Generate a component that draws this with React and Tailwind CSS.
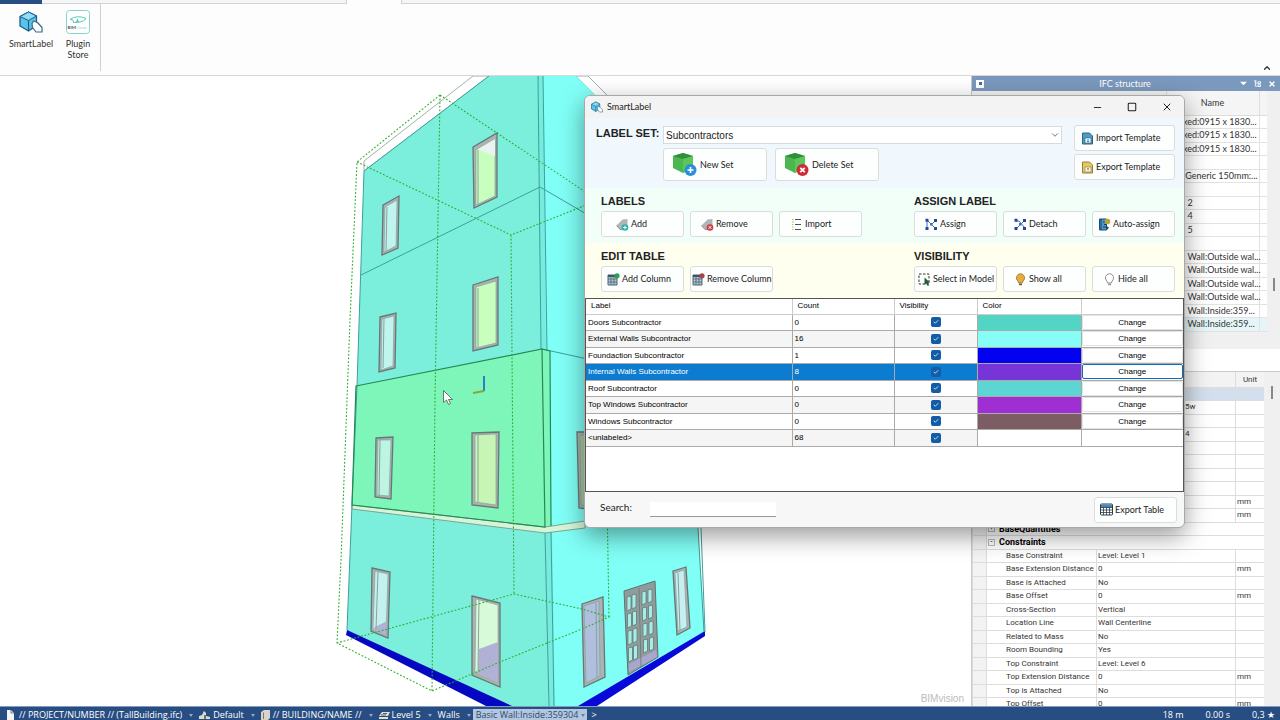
import { Check, ChevronDown, ChevronUp, Minus, Square, X } from 'lucide-react'

const compact = "font-['Lato','Roboto',sans-serif]"
const ui = "font-['Open_Sans','Noto_Sans',sans-serif]"

const labelRows = [
  { label: 'Doors Subcontractor', count: 0, color: '#53d5c5' },
  { label: 'External Walls Subcontractor', count: 16, color: '#86fdf6' },
  { label: 'Foundaction Subcontractor', count: 1, color: '#0202f0' },
  { label: 'Internal Walls Subcontractor', count: 8, color: '#7735d8', selected: true },
  { label: 'Roof Subcontractor', count: 0, color: '#5cd5d3' },
  { label: 'Top Windows Subcontractor', count: 0, color: '#a02fd3' },
  { label: 'Windows Subcontractor', count: 0, color: '#7b5d63' },
  { label: '<unlabeled>', count: 68 },
]

const treeRows = [
  'xed:0915 x 1830...', 'xed:0915 x 1830...', 'xed:0915 x 1830...', '',
  ':Generic 150mm:...', '', 'l 2', 'l 4', 'l 5', '',
  ': Wall:Outside wal...', ': Wall:Outside wal...', ': Wall:Outside wal...', ': Wall:Outside wal...',
  ': Wall:Inside:359...', ': Wall:Inside:359...',
]

const propertyRows = [
  { selected: true },
  { tail: '5w' },
  {},
  { tail: '4' },
  {},
  {},
  {},
  {},
  { unit: 'mm' },
  { unit: 'mm' },
  { group: 'BaseQuantities', sign: '+' },
  { group: 'Constraints', sign: '-' },
  { name: 'Base Constraint', value: 'Level: Level 1' },
  { name: 'Base Extension Distance', value: '0', unit: 'mm' },
  { name: 'Base is Attached', value: 'No' },
  { name: 'Base Offset', value: '0', unit: 'mm' },
  { name: 'Cross-Section', value: 'Vertical' },
  { name: 'Location Line', value: 'Wall Centerline' },
  { name: 'Related to Mass', value: 'No' },
  { name: 'Room Bounding', value: 'Yes' },
  { name: 'Top Constraint', value: 'Level: Level 6' },
  { name: 'Top Extension Distance', value: '0', unit: 'mm' },
  { name: 'Top is Attached', value: 'No' },
  { name: 'Top Offset', value: '0', unit: 'mm' },
]

/* ---------- icons ---------- */

const CubeIcon = ({ className }) => (
  <svg viewBox="0 0 24 22" className={className}>
    <path d="M1 5.5 9.5 1l8 4v9.5l-8 5.5L1 15z" fill="#5cc3e8" stroke="#1d5f86" strokeWidth="1.3" strokeLinejoin="round" />
    <path d="M1 5.5 9.5 9.5l8-4.5L9.5 1z" fill="#8edcf5" stroke="#1d5f86" strokeWidth="1" strokeLinejoin="round" />
    <path d="M9.5 9.5V20" stroke="#1d5f86" strokeWidth="1.2" />
    <path d="M13 12.500 14.500 10l4 1.500 4.500 5v4.500h-6l-3.500-4.500z" fill="#fff" stroke="#2f6d92" strokeWidth="1.200" strokeLinejoin="round" />
  </svg>
)

const StoreIcon = () => (
  <svg viewBox="0 0 24 24" className="size-6">
    <rect x=".5" y=".5" width="23" height="23" rx="3" fill="#fff" stroke="#86d3cd" />
    <path d="M4 9.500Q11 4.500 20 8.500 16 13.500 7 12.200 9 10 4 9.500Z" fill="none" stroke="#55c9b4" />
    <path d="M11.500 8.200 13 12h-3z" fill="#55c9b4" />
    <text x="1.500" y="18.500" fontSize="4.500" fontWeight="700" fill="#555">BIM</text>
    <text x="10.500" y="18.500" fontSize="4" fill="#8fd6cf">vision</text>
  </svg>
)

const BoxIcon = ({ remove }) => (
  <svg viewBox="0 0 25 25" className="size-[25px] shrink-0">
    <path d="M1 4 11 1l10 3v12l-10 5L1 16z" fill="#4cb750" />
    <path d="M1 4 11 1l10 3-10 3z" fill="#2f8f3a" />
    <path d="M11 7 21 4v12l-10 5z" fill="#5cc65c" />
    <circle cx="18.500" cy="18" r="6" fill={remove ? '#cf2c36' : '#2a8fd6'} />
    {remove
      ? <path d="m16.300 15.800 4.400 4.400m0-4.400-4.400 4.400" stroke="#fff" strokeWidth="1.800" />
      : <path d="M18.500 15v6m-3-3h6" stroke="#fff" strokeWidth="1.600" />}
  </svg>
)

const TagIcon = ({ remove }) => (
  <svg viewBox="0 0 13 13" className="size-[13px] shrink-0">
    <path d="M.5 7.500 6.500 1.500 11.500 1v7L7 11.500H4z" fill="#b1b5b7" />
    <path d="M.5 7.500 4 11.500 7 11.500" stroke="#8b8f92" fill="none" />
    <circle cx="9" cy="9.500" r="3.300" fill={remove ? '#cf3b45' : '#27b3b0'} />
    {remove
      ? <path d="m7.700 8.200 2.600 2.600m0-2.600-2.600 2.600" stroke="#fff" />
      : <path d="M9 7.700v3.600M7.200 9.500h3.600" stroke="#fff" />}
  </svg>
)

const ListIcon = () => (
  <svg viewBox="0 0 13 13" className="size-[13px] shrink-0">
    <path d="M5 1.500h6M5 6.500h6M5 11.500h6" stroke="#4a5068" strokeWidth="1.200" />
    <path d="M2 1.500h1.500M2 4h1.500M2 6.500h1.500M2 9h1.500M2 11.500h1.500" stroke="#d6b84d" />
  </svg>
)

const NodesIcon = ({ detach }) => (
  <svg viewBox="0 0 13 13" className="size-[13px] shrink-0">
    <path d={detach ? 'M2 3h3l6 7M2 11 11 2' : 'M2 2v9M2 2l9 9M6.500 6.500 11 2'} stroke="#3d6fc0" fill="none" />
    <path d="M.5.800h3v3h-3zM.5 9h3v3h-3zM9 1h3v3H9zM9 9h3v3H9z" fill="#24479a" />
    <path d="M5 5h2.500v2.500H5z" fill="#3d6fc0" />
  </svg>
)

const BookIcon = () => (
  <svg viewBox="0 0 13 13" className="size-[13px] shrink-0">
    <path d="M1.500 1h7v11h-7z" fill="#4d97c9" stroke="#1d4d78" />
    <path d="M3 1v11M5 4h3M5 9h4M6 6.500h3" stroke="#153e63" />
    <circle cx="9.500" cy="3.500" r="2.800" fill="#b9a437" />
    <path d="M8.500 8 11 9.500 9 12z" fill="#1d4d78" />
  </svg>
)

const ColumnIcon = ({ remove }) => (
  <svg viewBox="0 0 13 13" className="size-[13px] shrink-0">
    <path d="M1 2h9v10H1z" fill="#b4c6d3" stroke="#4d6475" />
    <path d="M1 3h9" stroke="#3a5262" strokeWidth="2" />
    <path d="M4 3v9M7 3v9M1 6h9M1 9h9" stroke="#4d6475" strokeWidth=".8" />
    <circle cx="10" cy="2.800" r="2.600" fill={remove ? '#a9404c' : '#2f9e52'} />
  </svg>
)

const SelectIcon = () => (
  <svg viewBox="0 0 13 13" className="size-[13px] shrink-0">
    <path d="M1 1h10v10H1z" fill="none" stroke="#333" strokeDasharray="2.500 1.500" />
    <path d="M6.500 4.500 12 9.500l-2 .3 1 2.500-1.300.7-1.200-2.500-2 1.200z" fill="#225c35" />
  </svg>
)

const BulbIcon = ({ on }) => (
  <svg viewBox="0 0 13 13" className="size-[13px] shrink-0">
    <path d="M6.500.7a4.200 4.200 0 0 1 2.600 7.400L8.400 10H4.600L3.900 8.100A4.200 4.200 0 0 1 6.500.700z" fill={on ? '#e3ae3a' : '#fff'} stroke={on ? '#9a7430' : '#777'} strokeWidth=".8" />
    <path d="M5 10.500h3v1.700H5z" fill={on ? '#6d5c3a' : '#999'} />
  </svg>
)

const TemplateIcon = ({ out }) => (
  <svg viewBox="0 0 13 13" className="size-[13px] shrink-0">
    <path d="M1.500 1h7l3 3v8h-10z" fill={out ? '#e6c95c' : '#4c9cc4'} stroke={out ? '#96803a' : '#2b6585'} />
    <path d="M4 6h6v5H4z" fill="#fff" stroke={out ? '#96803a' : '#2b6585'} strokeWidth=".7" />
    <path d={out ? 'M7 10V7M5.800 8.200 7 7l1.200 1.200' : 'M7 7v3M5.800 8.800 7 10l1.200-1.200'} stroke={out ? '#96803a' : '#2b6585'} strokeWidth=".8" fill="none" />
  </svg>
)

const GridIcon = () => (
  <svg viewBox="0 0 13 13" className="size-[13px] shrink-0">
    <rect x=".5" y="1" width="12" height="11" rx="1" fill="#fff" stroke="#2b3c4b" />
    <path d="M1 1.500h11v3H1z" fill="#3f87b5" />
    <path d="M.5 4.500h12M.5 7h12M.5 9.500h12M3.500 4v8M6.500 4v8M9.500 4v8" stroke="#2b3c4b" strokeWidth=".8" />
  </svg>
)

/* ---------- 3D view ---------- */

const windowPanes = [
  { frame: '473,147 497,133 497,197 474,208', glass: '476,150 495,139 495,196 476,205', fill: '#c9ffbe' },
  { frame: '383,205 399,196 398,248 382,255', glass: '385,207 397,200 396,246 384,252', fill: '#c0f4ee' },
  { frame: '473,285 498,277 498,345 473,351', glass: '476,287 496,281 496,343 476,348', fill: '#c9ffbe' },
  { frame: '380,317 396,313 395,368 379,372', glass: '382,319 394,316 393,366 381,370', fill: '#c0f4ee' },
  { frame: '376,438 393,437 391,499 375,497', glass: '378,440 391,440 389,496 377,495', fill: '#bdf4e2' },
  { frame: '472,433 499,432 498,508 472,505', glass: '475,435 496,434 496,505 475,502', fill: '#c7f5b6' },
  { frame: '577,432 587,432 587,509 579,508', glass: '580,435 587,435 587,506 581,505', fill: '#a9c99e' },
  { frame: '372,568 390,572 388,638 371,631', glass: '375,571 388,574 386,635 373,629', fill: '#c3f1f0', floor: '375,627 387,621 386,635 374,629' },
  { frame: '472,596 500,603 500,687 472,675', glass: '476,599 498,605 498,683 475,672', fill: '#d7fbd9', floor: '479,649 498,642 498,683 478,673' },
  { frame: '582,604 603,597 605,677 584,687', glass: '584,606 599,601 600,676 586,683', fill: '#b0bfdd' },
  { frame: '673,571 686,567 690,628 677,635', glass: '675,573 684,570 687,627 678,631', fill: '#c5eff0' },
]

const ModelView = () => (
  <svg viewBox="0 76 971 630" preserveAspectRatio="xMinYMin slice" className="h-full w-full" role="img" aria-label="TallBuilding">
    <g stroke="#8a9a9a" strokeWidth=".8" fill="#fff">
      <path d="M473 76 364 161v10L489 76z" />
      <path d="M576 76 640 140V128L588 76z" />
    </g>
    <path d="M489 76h50l2 274 4 177 4 185h-42L347 632l5-127 5-119 7-215z" fill="#7befdc" />
    <path d="M539 76h37l122 120v332l7 104-130 80h-26l-4-185-4-177z" fill="#80fff6" />
    <path d="M538 76h5l3 274 6 180 3 180h-6l-4-183-4-177z" fill="#76ecdf" />
    <path d="m356 386 186-37 8 1 1 176-6 1-193-22z" fill="#7ef6ba" />
    <path d="m352 505 193 22 40-6v7l-40 5-193-24z" fill="#d5f5d8" stroke="#7aa494" />
    <path d="M347 630 512 706l8 6h-22l-12-6-140-71z" fill="#0508c0" />
    <path d="m705 631-127 75-6 6h16l9-6 108-70z" fill="#0808d8" />
    <g fill="none" stroke="#3f9f9b" strokeWidth="1">
      <path d="m364 171-7 215-5 119-5 125M364 171 489 76" />
      <path d="m361 275 179-88 60 35M538 76l3 274M543 76l4 274M542 349l50 11" />
      <path d="m545 533 4 173M551 532l3 174M698 528l6 104M701 528l4 104" />
    </g>
    <path d="m356 386 186-37 3 178-193-22zM542 349l8 2 1 175" fill="none" stroke="#248a55" strokeWidth="1.2" />
    {windowPanes.map((pane) => (
      <g key={pane.frame}>
        <polygon points={pane.frame} fill="#a9b3b0" stroke="#667776" strokeWidth="1.300" />
        <polygon points={pane.glass} fill={pane.fill} stroke="#7f9a98" strokeWidth=".6" />
        {pane.floor && <polygon points={pane.floor} fill="#b1b1d6" />}
      </g>
    ))}
    <path d="M478 150v54M387 207l-1 44M478 288v59M384 319l-1 49M380 440l-1 55M478 435v67M378 572l-2 57M479 600l-1 73M596 603l1 74M678 573l2 58" stroke="#8aa19e" strokeWidth="1" fill="none" />
    <path d="m479 150 16 6v-17l-17 10z" fill="#e9f4f1" />
    <path d="m624 591 31-10 3 76-30 18z" fill="#8f9c9c" stroke="#5f7272" />
    <path d="m629 664 27-14 1 7-28 15z" fill="#a9a7cf" />
    <g fill="#a5eee6" stroke="#68797a" strokeWidth=".8">
      {[0, 1, 2, 3].map((row) => (
        <g key={row}>
          <path d={`M${627 + row / 2} ${597 + row * 17}l4-1 0 13-4 2z`} />
          <path d={`M${632 + row / 2} ${595 + row * 17}l4-1 0 13-4 2z`} />
          <path d={`M${642 + row / 2} ${592 + row * 16}l4-1 0 12-4 2z`} />
          <path d={`M${648 + row / 2} ${590 + row * 16}l4-1 0 12-4 2z`} />
        </g>
      ))}
      <path d="m639 588 2 79" />
    </g>
    <g fill="none" stroke="#2fae2f" strokeWidth="1.100" strokeDasharray="1.800 1.800">
      <path d="m440 95-83 67-7 158-9 240-4 83 95 48 68-29 82-33 27-12-27-8-68-15-177 49" />
      <path d="M440 95 435 400 432 691M440 95l150 100M357 162l154 73 80-32M511 235l3 359M607 500l2 117" />
    </g>
    <path d="M484 376v15" stroke="#2e7fc2" strokeWidth="2" />
    <path d="m484 391-11 2" stroke="#8aa632" strokeWidth="2" />
    <path d="M443.500 390.500v12l3-2.500 2 4.500 2-1-2-4h4z" fill="#fff" stroke="#555" strokeWidth=".8" />
  </svg>
)

/* ---------- dialog ---------- */

const ToolButton = ({ icon, children, className }) => (
  <button type="button" className={`flex items-center gap-[2px] rounded-[3px] border border-[#d9dedc] bg-[#fdfefe] text-left whitespace-nowrap ${className}`}>
    {icon}
    <span>{children}</span>
  </button>
)

const Section = ({ title, children }) => (
  <div>
    <h3 className="mb-[3px] font-['Liberation_Sans',sans-serif] text-[11px]/[14px] font-bold text-[#222]">{title}</h3>
    <div className="flex gap-[6px]">{children}</div>
  </div>
)

const LabelTable = () => (
  <div className="h-[194px] border border-[#555] bg-white">
    <table className="w-full table-fixed border-collapse text-left font-['Liberation_Sans',sans-serif] text-[8px] text-black">
      <colgroup>
        <col className="w-[206px]" />
        <col className="w-[102px]" />
        <col className="w-[83px]" />
        <col className="w-[104px]" />
        <col />
      </colgroup>
      <thead>
        <tr className="h-[15px]">
          {['Label', 'Count', 'Visibility', 'Color', ''].map((head) => (
            <th key={head} className="border-r border-b border-[#ccc] px-[5px] py-0 leading-[12px] font-normal last:border-r-0">{head}</th>
          ))}
        </tr>
      </thead>
      <tbody>
        {labelRows.map((row) => (
          <tr key={row.label} className={row.selected ? 'h-[17px] bg-[#0c7bd0] text-white' : 'odd:h-[16px] even:h-[17px] even:bg-[#f5f5f5]'}>
            <td className="border-r border-b border-[#aaa] px-[2px] py-0 leading-[13px]">{row.label}</td>
            <td className="border-r border-b border-[#aaa] px-[2px] py-0 leading-[13px]">{row.count}</td>
            <td className="border-r border-b border-[#aaa] p-0">
              <label className="relative mx-auto block size-[10px]">
                <input
                  type="checkbox"
                  defaultChecked
                  aria-label={`Show ${row.label}`}
                  className="block size-[10px] appearance-none rounded-[2px] bg-[#125ea6]"
                />
                <Check className="pointer-events-none absolute inset-[2px] size-[6px] text-white" strokeWidth={3} />
              </label>
            </td>
            <td className="border-r border-b border-[#aaa] bg-white p-0" style={{ backgroundColor: row.color }} />
            <td className="border-b border-[#aaa] bg-white p-0">
              {row.color && (
                <button
                  type="button"
                  className={row.selected
                    ? 'block h-[15px] w-full rounded-[2px] border border-[#0c6cbd] text-center leading-[13px] text-black'
                    : 'block h-[15px] w-full rounded-[2px] border border-[#e3e3e3] text-center leading-[13px]'}
                >
                  Change
                </button>
              )}
            </td>
          </tr>
        ))}
      </tbody>
    </table>
  </div>
)

const SmartLabelDialog = () => (
  <div role="dialog" aria-label="SmartLabel" className={`absolute top-[95px] left-[584px] w-[601px] overflow-hidden rounded-[6px] border border-[#a5a9aa] bg-[#f7f7f7] text-[9px] text-[#222] shadow-[0_8px_24px_rgba(0,0,0,0.4)] ${compact}`}>
    <div className="flex h-[22px] items-center gap-1 bg-[#f3f3f3] pr-[11px] pl-[6px]">
      <CubeIcon className="size-[12px]" />
      <span className="flex-1">SmartLabel</span>
      <div className="flex gap-6">
        <button type="button" aria-label="Minimize"><Minus className="size-[11px]" strokeWidth={2} /></button>
        <button type="button" aria-label="Maximize"><Square className="size-[10px]" strokeWidth={2.5} /></button>
        <button type="button" aria-label="Close"><X className="size-[12px]" strokeWidth={2} /></button>
      </div>
    </div>

    <div className="flex h-[70px] items-start bg-[#f0f8fd] pt-[7px] pr-[9px] pl-[11px]">
      <label htmlFor="label-set" className="w-[67px] pt-px font-['Liberation_Sans',sans-serif] text-[11px]/[14px] font-bold whitespace-nowrap">LABEL SET:</label>
      <div className="flex-1 pt-px">
        <div className="relative">
          <select id="label-set" className="block h-[18px] w-full appearance-none border border-[#d5dbdf] bg-white px-[2px] font-['Liberation_Sans',sans-serif] text-[10px] leading-[15px]">
            <option>Subcontractors</option>
          </select>
          <ChevronDown className="pointer-events-none absolute top-1 right-[2px] size-[10px] text-[#555]" />
        </div>
        <div className="mt-[4px] flex gap-2">
          <ToolButton className="h-[33px] w-[104px] gap-[3px] pl-2" icon={<BoxIcon />}>New Set</ToolButton>
          <ToolButton className="h-[33px] w-[104px] gap-[3px] pl-2" icon={<BoxIcon remove />}>Delete Set</ToolButton>
        </div>
      </div>
      <div className="ml-3 flex flex-col gap-[3px]">
        <ToolButton className="h-[26px] w-[101px] pl-[6px]" icon={<TemplateIcon />}>Import Template</ToolButton>
        <ToolButton className="h-[26px] w-[101px] pl-[6px]" icon={<TemplateIcon out />}>Export Template</ToolButton>
      </div>
    </div>

    <div className="flex h-[55px] justify-between bg-[#f2fff8] pt-[6px] pr-[9px] pl-4">
      <Section title="LABELS">
        <ToolButton className="h-[26px] w-[83px] pl-[14px]" icon={<TagIcon />}>Add</ToolButton>
        <ToolButton className="h-[26px] w-[83px] pl-[10px]" icon={<TagIcon remove />}>Remove</ToolButton>
        <ToolButton className="h-[26px] w-[83px] pl-[10px]" icon={<ListIcon />}>Import</ToolButton>
      </Section>
      <Section title="ASSIGN LABEL">
        <ToolButton className="h-[26px] w-[83px] pl-[10px]" icon={<NodesIcon />}>Assign</ToolButton>
        <ToolButton className="h-[26px] w-[83px] pl-[10px]" icon={<NodesIcon detach />}>Detach</ToolButton>
        <ToolButton className="h-[26px] w-[83px] pl-[5px]" icon={<BookIcon />}>Auto-assign</ToolButton>
      </Section>
    </div>

    <div className="flex h-[55px] justify-between bg-[#fffff0] pt-[6px] pr-[9px] pl-4">
      <Section title="EDIT TABLE">
        <ToolButton className="h-[26px] w-[83px] pl-[5px]" icon={<ColumnIcon />}>Add Column</ToolButton>
        <ToolButton className="h-[26px] w-[83px] pl-px" icon={<ColumnIcon remove />}>Remove Column</ToolButton>
      </Section>
      <Section title="VISIBILITY">
        <ToolButton className="h-[26px] w-[83px] pl-[3px]" icon={<SelectIcon />}>Select in Model</ToolButton>
        <ToolButton className="h-[26px] w-[83px] pl-[10px]" icon={<BulbIcon on />}>Show all</ToolButton>
        <ToolButton className="h-[26px] w-[83px] pl-[10px]" icon={<BulbIcon />}>Hide all</ToolButton>
      </Section>
    </div>

    <LabelTable />

    <div className="flex h-[35px] items-center pr-[7px] pl-[15px]">
      <label htmlFor="label-search" className="w-[50px] pb-[4px] text-[10px]">Search:</label>
      <input id="label-search" type="text" className="h-[15px] w-[126px] border-b border-[#999] bg-white px-1 outline-none" />
      <ToolButton className="ml-auto h-[26px] w-[83px] pl-[5px]" icon={<GridIcon />}>Export Table</ToolButton>
    </div>
  </div>
)

/* ---------- right side ---------- */

const SidePanel = () => (
  <aside className={`flex w-[309px] shrink-0 flex-col overflow-hidden border-l border-[#c9c9c9] bg-[#f0f0f0] text-[9px] text-[#333] ${compact}`}>
    <div className="flex h-[15px] shrink-0 items-center bg-[#7b99bd] px-[4px] text-white">
      <span className="grid size-[8px] place-items-center bg-white"><span className="size-[3px] bg-[#4a6c98]" /></span>
      <h2 className="flex-1 pl-[26px] text-center">IFC structure</h2>
      <div className="flex items-center gap-[7px]">
        <svg viewBox="0 0 8 8" className="size-[7px]"><path d="M0 2h8L4 6z" fill="#fff" /></svg>
        <svg viewBox="0 0 8 8" className="size-[7px]"><path d="M0 1h3M1.500 1v6H4M1.500 3.500H4M4.500 2h3v2h-3zM4.500 5.500h3v2h-3z" stroke="#fff" fill="none" /></svg>
        <X className="size-[8px]" strokeWidth={4} />
      </div>
    </div>

    <div className="flex h-[258px] shrink-0 pb-[18px]">
      <table className="w-[295px] table-fixed border-collapse bg-white">
        <colgroup>
          <col className="w-[194px]" />
          <col className="w-[93px]" />
          <col />
        </colgroup>
        <thead>
          <tr className="h-[24px] bg-[#f5f5f5]">
            <th className="border-r border-b border-[#ddd]" />
            <th className="border-r border-b border-[#ddd] p-0 text-center font-normal">Name</th>
            <th className="border-b border-[#ddd]" />
          </tr>
        </thead>
        <tbody>
          {treeRows.map((name, i) => (
            <tr key={i} className="last:bg-[#e6f6f8] odd:h-[13px] even:h-[14px]">
              <td className="border-b border-[#e2e2e2]" />
              <td className="border-r border-b border-[#e2e2e2] py-0 pr-0 pl-[17px] leading-[12px] whitespace-nowrap">{name}</td>
              <td className="border-b border-[#e2e2e2]" />
            </tr>
          ))}
        </tbody>
      </table>
      <div className="flex flex-1 items-end justify-center pb-[40px]"><span className="h-[13px] w-[2px] bg-[#888]" /></div>
    </div>

    <div className="h-[23px] shrink-0 border-b border-[#ccc] bg-white" />

    <div className="flex min-h-0 flex-1 items-start overflow-hidden">
      <table className="w-[292px] table-fixed border-collapse bg-white text-left font-['Roboto',sans-serif] text-[8px]">
        <colgroup>
          <col className="w-[14px]" />
          <col className="w-[110px]" />
          <col className="w-[139px]" />
          <col />
        </colgroup>
        <thead>
          <tr className="h-[15px] bg-[#f3f3f3]">
            <th className="border-b border-[#ddd]" />
            <th className="border-b border-[#ddd]" />
            <th className="border-b border-[#ddd]" />
            <th className="border-b border-l border-[#ddd] p-0 text-center leading-[13px] font-normal">Unit</th>
          </tr>
        </thead>
        <tbody>
          {propertyRows.map((row, i) => (
            <tr key={i} className={row.selected ? 'h-[13px] bg-[#d3dfec]' : 'odd:h-[13px] even:h-[14px]'}>
              <td className="border-x border-b border-[#ddd] bg-[#f3f3f3]" />
              {row.group ? (
                <td colSpan={3} className="border-b border-[#ddd] p-0 leading-[12px]">
                  <span className="flex items-center gap-[4px] pl-px text-[9px]/[12px] font-bold text-black">
                    <span className="grid size-[7px] place-items-center border border-[#bbb] text-[7px]/[5px] font-normal">{row.sign}</span>
                    {row.group}
                  </span>
                </td>
              ) : (
                <>
                  <td className="border-b border-[#ddd] py-0 pr-0 pl-[19px] leading-[12px] whitespace-nowrap">{row.name}</td>
                  <td className="border-b border-l border-[#ddd] p-0 pl-px leading-[12px]">
                    {row.value}
                    {row.tail && <span className="pl-[87px]">{row.tail}</span>}
                  </td>
                  <td className="border-b border-l border-[#ddd] p-0 pl-px leading-[12px]">{row.unit}</td>
                </>
              )}
            </tr>
          ))}
        </tbody>
      </table>
      <div className="flex flex-1 justify-center pt-[14px]"><span className="h-[13px] w-[2px] bg-[#888]" /></div>
    </div>
  </aside>
)

/* ---------- frame ---------- */

const Ribbon = () => (
  <header className={`flex h-[76px] shrink-0 flex-col border-b border-[#d8d8d8] bg-[#fdfdfd] text-[9px]/[11px] text-[#333] ${compact}`}>
    <div className="flex h-[4px]">
      <span className="w-[42px] bg-[#284d82]" />
      <span className="w-[305px] border-r border-b border-[#cfd4d4] bg-[#f4f6f6]" />
      <span className="w-[54px]" />
      <span className="flex-1 border-b border-l border-[#cfd4d4] bg-[#f4f6f6]" />
    </div>
    <div className="flex flex-1 items-end justify-between pr-2">
      <div className="mb-[4px] flex h-[67px] gap-[10px] self-start border-r border-[#d0d0d0] pt-[6px] pr-[8px] pl-[8px]">
        <button type="button" className="flex w-[46px] flex-col items-center gap-[4px]">
          <CubeIcon className="size-6" />
          SmartLabel
        </button>
        <button type="button" className="flex w-7 flex-col items-center gap-[4px]">
          <StoreIcon />
          Plugin Store
        </button>
      </div>
      <button type="button" aria-label="Collapse ribbon" className="mb-[2px]"><ChevronUp className="size-[10px]" strokeWidth={3} /></button>
    </div>
  </header>
)

const Caret = () => (
  <svg viewBox="0 0 4 3" className="mr-[6px] ml-[7px] h-[3px] w-[4px] shrink-0"><path d="M0 0h4L2 3z" fill="#8ea9cb" /></svg>
)

const StatusBar = () => (
  <footer className={`flex h-[14px] shrink-0 items-center border-t border-[#7f9dbf] bg-[#284d82] pt-[3px] pr-[5px] pl-[6px] text-[9px]/[12px] whitespace-nowrap text-white ${ui}`}>
    <svg viewBox="0 0 9 10" className="mr-1 h-[10px] w-[9px]"><path d="M1 0h4l3 3v7H1z" fill="#f4f4f4" /><path d="M5 0v3h3" stroke="#284d82" strokeWidth=".7" fill="none" /></svg>
    <span>// PROJECT/NUMBER // (TallBuilding.ifc)</span>
    <Caret />
    <svg viewBox="0 0 11 10" className="mr-[3px] h-[10px] w-[11px]"><path d="M0 9V6l3-1 2-4 2 2v3l4 1v2z" fill="#d9dccf" /><path d="M5 9V5h2v4" fill="#697b57" /></svg>
    <span>Default</span>
    <Caret />
    <svg viewBox="0 0 9 10" className="mr-[3px] h-[10px] w-[9px]"><path d="M0 2 3 0h6v8l-2 2H0z" fill="#d8d3c9" /><path d="M2.500 2.500V9" stroke="#777" /></svg>
    <span>// BUILDING/NAME //</span>
    <Caret />
    <svg viewBox="0 0 11 9" className="mr-[2px] h-[9px] w-[11px]"><path d="M0 5 3 1h8L9 5zM0 6h9v2H0z" fill="#e2e0d2" /><path d="M2 4h5M4 2.500h4" stroke="#55606b" /></svg>
    <span>Level 5</span>
    <Caret />
    <span>Walls</span>
    <Caret />
    <span className="-ml-1 flex items-center bg-[#b2c6df] pl-[3px] text-[#2e4a70]">
      Basic Wall:Inside:359304
      <svg viewBox="0 0 4 3" className="mr-[2px] ml-[3px] h-[3px] w-[4px]"><path d="M0 0h4L2 3z" fill="#6582a8" /></svg>
    </span>
    <span className="pl-[4px]">&gt;</span>
    <div className="ml-auto flex gap-[22px]">
      <span>18 m</span>
      <span>0.00 s</span>
      <span>0,3 ★</span>
    </div>
  </footer>
)

export default function App() {
  return (
    <div className="relative flex h-screen flex-col overflow-hidden bg-white">
      <Ribbon />
      <main className="flex min-h-0 flex-1">
        <div className="relative min-w-0 flex-1 overflow-hidden">
          <ModelView />
          <span className="absolute right-[7px] bottom-0 font-['Liberation_Sans',sans-serif] text-[10px]/[15px] text-[#bbb]">BIMvision</span>
        </div>
        <SidePanel />
      </main>
      <StatusBar />
      <SmartLabelDialog />
    </div>
  )
}
